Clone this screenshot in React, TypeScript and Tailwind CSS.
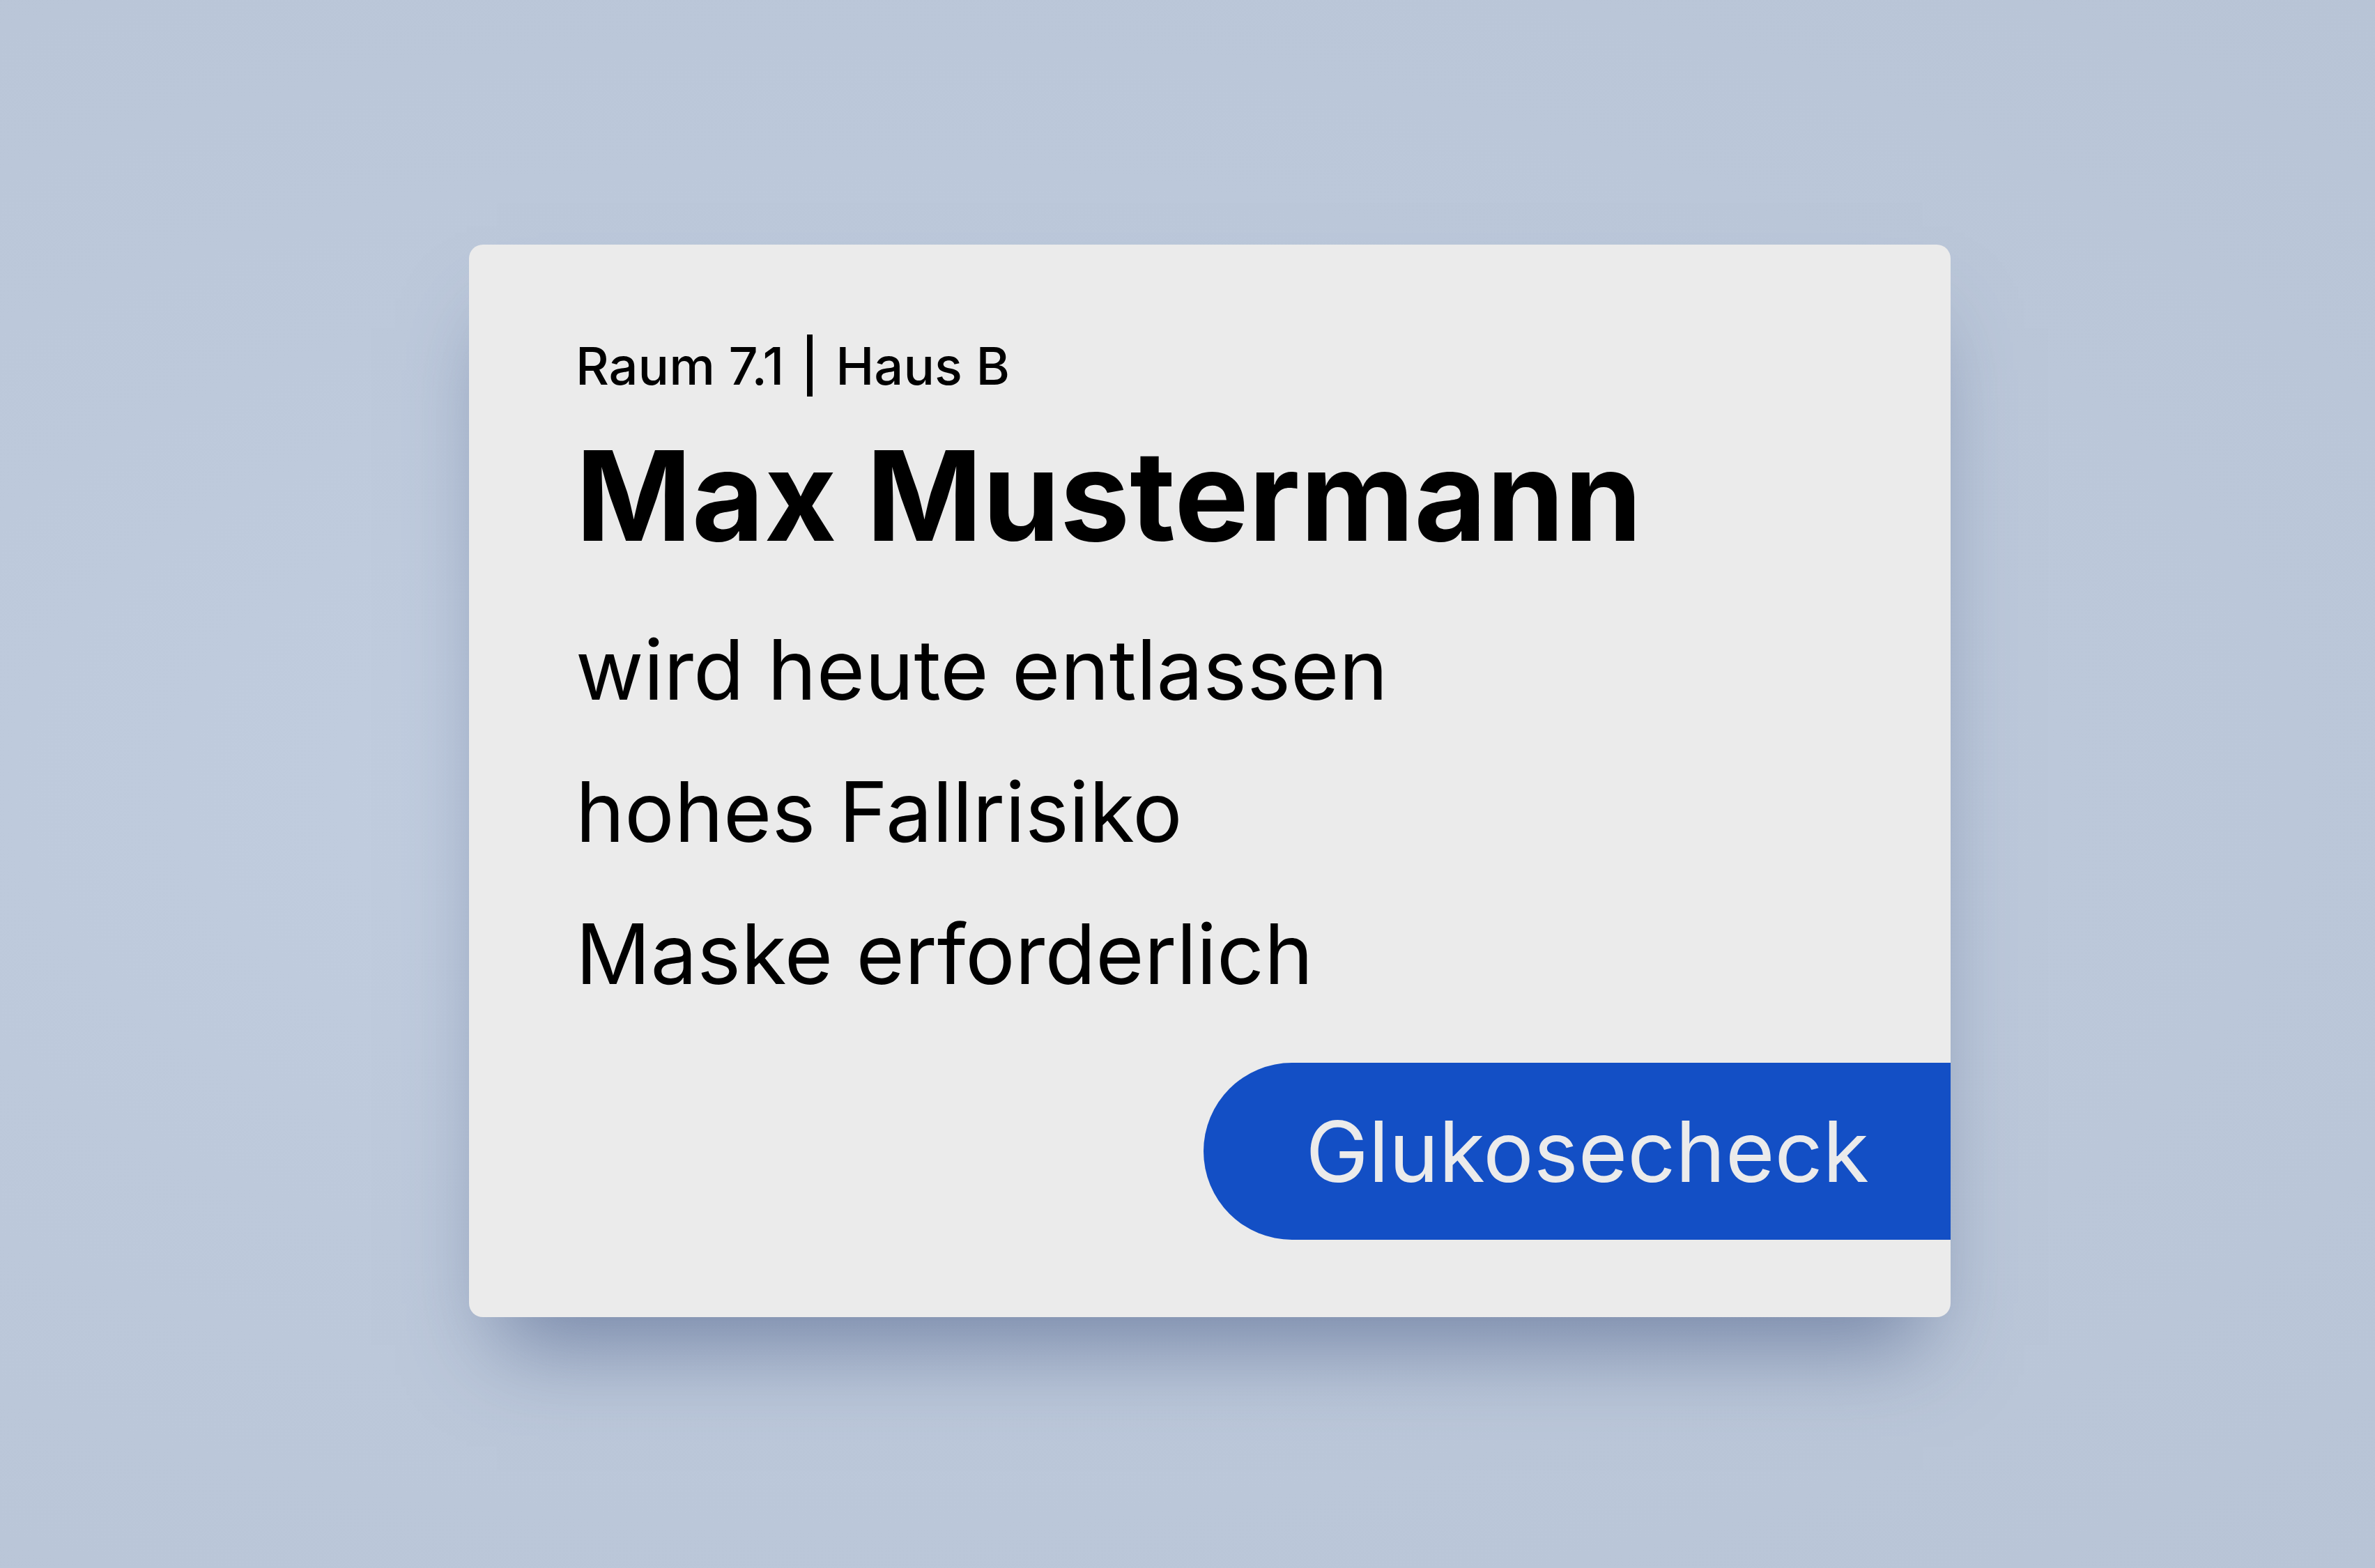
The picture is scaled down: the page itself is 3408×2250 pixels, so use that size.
export default function App() {
  return (
    <div
      className="w-[3408px] h-[2250px] pl-[673px] pt-[351px] bg-[radial-gradient(ellipse_at_35%_50%,#c3cfe1_0%,#bdc9db_45%,#b8c4d6_100%)]"
      style={{ fontFamily: "Inter, 'Noto Sans', sans-serif" }}
    >
      {/* Patient card */}
      <div className="w-[2126px] h-[1539px] rounded-[20px] bg-[#ebebeb] overflow-hidden flex flex-col pl-[153px] pt-[129px] shadow-[0_80px_120px_-40px_rgba(60,80,125,0.55)]">
        <div className="flex items-center gap-[33px] h-[89px] text-black">
          <span className="text-[74px] leading-none font-medium">Raum 7.1</span>
          <div className="w-[8px] h-[89px] bg-black" />
          <span className="text-[74px] leading-none font-medium">Haus B</span>
        </div>

        <h1 className="mt-[53px] text-[179px] leading-none font-bold text-black">Max Mustermann</h1>

        <div className="mt-[58px] flex flex-col text-[119px] leading-[204px] text-black">
          <p>wird heute entlassen</p>
          <p>hohes Fallrisiko</p>
          <p>Maske erforderlich</p>
        </div>

        {/* Task pill */}
        <div className="mt-[54px] self-end h-[254px] flex items-center pl-[146px] pr-[117px] rounded-l-full bg-[#134fc5]">
          <span className="text-[121px] leading-none text-[#ebebeb]">Glukosecheck</span>
        </div>
      </div>
    </div>
  );
}
